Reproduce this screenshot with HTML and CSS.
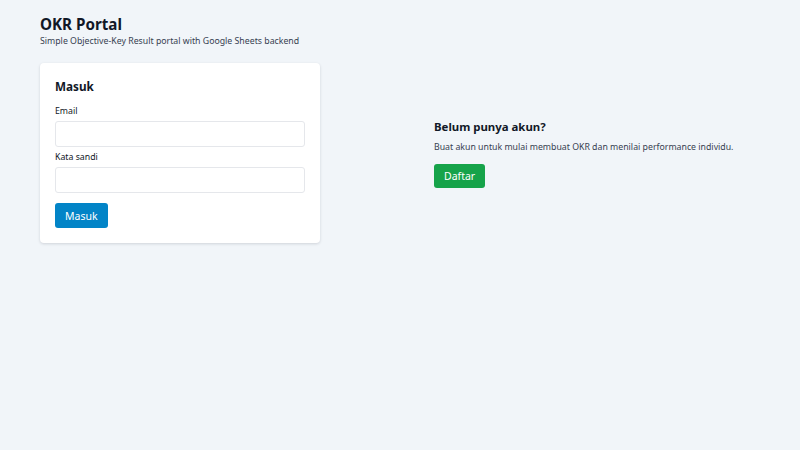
FILE: index.html
```html
<!DOCTYPE html>
<html lang="id">
<head>
    <meta charset="UTF-8">
    <meta name="viewport" content="width=device-width, initial-scale=1.0">
    <title>OKR Portal</title>
    <link rel="stylesheet" href="styles.css">
</head>
<body>
    <div class="container">
        <!-- Header -->
        <header class="header">
            <h1>OKR Portal</h1>
            <p class="subtitle">Simple Objective-Key Result portal with Google Sheets backend</p>
        </header>

        <div class="grid">
            <!-- Login card -->
            <div class="card">
                <h2>Masuk</h2>
                <form>
                    <label for="email">Email</label>
                    <input type="email" id="email">
                    <label for="password">Kata sandi</label>
                    <input type="password" id="password">
                    <button type="button" class="btn btn-primary">Masuk</button>
                </form>
            </div>

            <!-- Register info -->
            <div class="panel">
                <h3>Belum punya akun?</h3>
                <p>Buat akun untuk mulai membuat OKR dan menilai performance individu.</p>
                <button type="button" class="btn btn-success">Daftar</button>
            </div>
        </div>
    </div>
</body>
</html>
```

FILE: styles.css
```css
/* General Styling */
body {
    font-family: 'Noto Sans', 'Open Sans', sans-serif;
    background-color: #f1f5f9;
    color: #111827;
    margin: 0;
    padding: 0;
}

.container {
    padding: 14px 40px;
}

/* Header */
.header h1 {
    font-size: 15.2px;
    font-weight: 700;
    margin: 0;
    line-height: 20px;
}

.subtitle {
    font-size: 8.75px;
    line-height: 12px;
    color: #374151;
    margin: 1px 0 0;
}

.grid {
    display: grid;
    grid-template-columns: 1fr 1fr;
    gap: 24px;
    align-items: center;
    margin-top: 16px;
}

/* Card */
.card {
    max-width: 250px;
    background: #fff;
    border-radius: 4px;
    padding: 14px 15px 15px;
    box-shadow: 0 1px 3px rgba(15, 23, 42, 0.15);
}

.card h2 {
    font-size: 11.7px;
    font-weight: 700;
    margin: 0 0 10px;
    line-height: 18px;
}

.card label {
    display: block;
    font-size: 8.75px;
    line-height: 12px;
    margin-bottom: 4px;
}

.card input {
    display: block;
    box-sizing: border-box;
    width: 100%;
    height: 26px;
    border: 1px solid #e5e7eb;
    border-radius: 3px;
    margin: 0 0 4px;
    background: #fff;
}

/* Buttons */
.btn {
    display: block;
    border: none;
    border-radius: 3px;
    color: #fff;
    font-family: inherit;
    font-size: 10.5px;
    padding: 0 10px;
    height: 25px;
    cursor: pointer;
}

.btn-primary {
    background-color: #0284c7;
    margin-top: 10px;
}

.btn-success {
    background-color: #16a34a;
    height: 24px;
}

/* Right panel */
.panel {
    padding-left: 22px;
}

.panel h3 {
    font-size: 11.4px;
    font-weight: 700;
    margin: 0 0 6px;
    line-height: 16px;
}

.panel p {
    font-size: 8.75px;
    line-height: 12px;
    color: #374151;
    margin: 0 0 11px;
}
```
